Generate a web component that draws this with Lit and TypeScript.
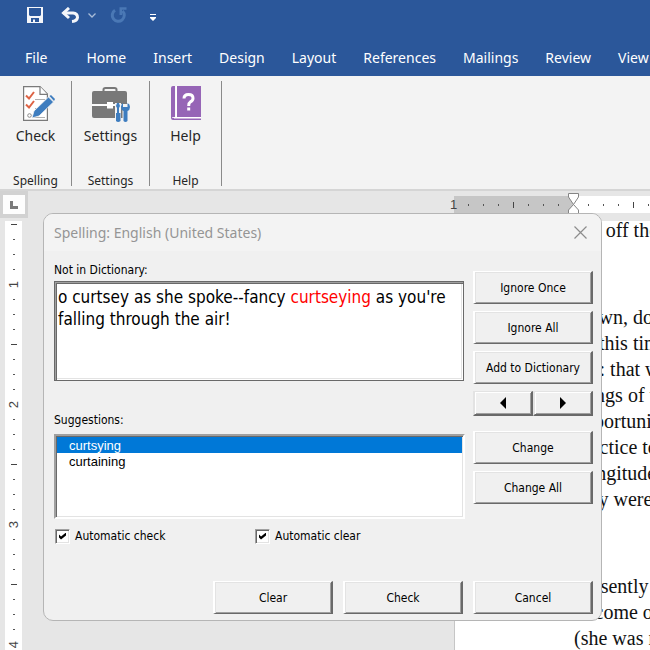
import { LitElement, html, css, svg } from "lit";
import { customElement } from "lit/decorators.js";

const TABS = ["File", "Home", "Insert", "Design", "Layout", "References", "Mailings", "Review", "View"];

const PARAGRAPHS = [
  ["fell off the top"],
  [
    "Down, down, down.",
    "by this time?",
    "see: that would be",
    "things of this sort",
    "opportunity for",
    "practice to say",
    "Longitude I've",
    "they were nice",
  ],
  ["Presently she", "to come out", "(she was rather"],
];

const saveIcon = svg`<svg width="16" height="16" viewBox="0 0 16 16" aria-hidden="true">
  <path fill="#f4f6fa" fill-rule="evenodd" d="M0 0H16V16H0ZM2 1V8L3 9H13L14 8V1ZM4 11V15H6V12.500H8V15H12V11Z"/></svg>`;

const undoIcon = svg`<svg width="19" height="16" viewBox="0 0 19 16" aria-hidden="true" fill="none" stroke="#f4f6fa">
  <path stroke-width="3" d="M2 6H12Q16.500 6.500 16.500 10.500Q16 14 11 14.500"/>
  <path stroke-width="3" d="M8 1L2.500 6L8 11"/></svg>`;

const chevronIcon = svg`<svg width="8" height="5" viewBox="0 0 8 5" aria-hidden="true">
  <path fill="none" stroke="#a9bcd8" stroke-width="1.300" d="M.5 .5L4 4L7.500 .5"/></svg>`;

const redoIcon = svg`<svg width="17" height="17" viewBox="0 0 17 17" aria-hidden="true" fill="none" stroke="#4a78b5">
  <path stroke-width="3" d="M5 3.200A6 6 0 1 0 12.500 4"/>
  <path stroke-width="2.600" d="M16.500 1.500H10.800V8"/></svg>`;

const customizeIcon = svg`<svg width="6" height="7" viewBox="0 0 6 7" aria-hidden="true">
  <path fill="#fff" d="M0 0H6V1H0ZM0 3H6V4L3 7L0 4Z"/></svg>`;

const checkIcon = svg`<svg width="38" height="36" viewBox="-6 0 38 36" aria-hidden="true">
  <path fill="#fff" stroke="#7a7a7a" stroke-width="1.200" d="M.6 .6H17L24.400 8V34.400H.6Z"/>
  <path fill="#fff" stroke="#7a7a7a" stroke-width="1.200" d="M17 .6V8.400H24.400"/>
  <path stroke="#b0b0b0" d="M12 13.500H22M12 22.500H18M9 31.500H22"/>
  <path fill="none" stroke="#dd6345" stroke-width="2" d="M3 9.500L6 12.500L11 6M3 18.500L6 21.500L11 15"/>
  <circle cx="6.500" cy="29.500" r="1.800" fill="none" stroke="#8a8a8a"/>
  <path fill="#3e7dbf" stroke="#f3f3f3" stroke-width=".8" d="M9 32L11 25L25.500 11L30.500 16L16 30Z"/>
  <path fill="#3e7dbf" d="M26.500 10L28 9L32 13L31 15Z"/></svg>`;

const settingsIcon = svg`<svg width="38" height="37" viewBox="0 0 38 37" aria-hidden="true">
  <path fill="none" stroke="#787878" stroke-width="2" d="M11.500 6V3.500Q11.500 2 13.500 2H22.500Q24.500 2 24.500 3.500V6"/>
  <path fill="#787878" d="M2 5H33Q35 5 35 7V18H0V7Q0 5 2 5ZM0 20H35V32H2Q0 32 0 30Z"/>
  <path fill="#fff" d="M0 18.500H35V19.800H0ZM15 16H21V22.500H15Z"/>
  <path stroke="#f3f3f3" stroke-width="6" d="M26 17V36M33.500 18V36"/>
  <path fill="#3e7dbf" d="M25 17H27L28 20L27 22V27H28.500V35Q26 37 24 35V27H25V22L24 20Z"/>
  <path fill="#3e7dbf" d="M31 17V21H35.500V17Q38 18 38 21Q38 24 35.500 25V35Q33.500 37 31.500 35V25Q29 24 29 21Q29 18 31 17Z"/></svg>`;

const helpIcon = svg`<svg width="30" height="34" viewBox="0 0 30 34" aria-hidden="true">
  <path fill="#9665b6" d="M2 0H30V31H5V0H4V31H2Q1 31 1 32H30V34H2Q0 34 0 32V2Q0 0 2 0Z"/>
  <path fill="#fff" d="M4.500 0H6V31H4.500ZM3 31H30V32.500H3Z"/>
  <path fill="none" stroke="#fff" stroke-width="3" d="M13 12.500Q13 8.500 17.500 8.500Q22 8.500 22 12.300Q22 14.500 19.500 15.800Q17.700 17 17.700 20"/>
  <path fill="#fff" d="M16.200 21.500H19.200V24.500H16.200Z"/></svg>`;

const GROUPS = [
  { action: "Check", group: "Spelling", icon: checkIcon },
  { action: "Settings", group: "Settings", icon: settingsIcon },
  { action: "Help", group: "Help", icon: helpIcon },
];

/* One mark per eighth of an inch; a number stands at each full inch. */
const mark = (i: number, inch: number) =>
  i % 8 === 0 ? html`<span class="num">${inch}</span>` : html`<span class=${i % 4 === 0 ? "half" : "dot"}></span>`;

@customElement("word-ribbon")
class WordRibbon extends LitElement {
  static styles = css`
    :host { display: block; font-family: "Noto Sans", "Open Sans", sans-serif; }
    button { border: 0; padding: 0; background: none; font: inherit; color: inherit; display: flex; align-items: center; }
    .head { background: #2b579a; height: 76px; overflow: hidden; }
    .quick { display: flex; align-items: center; height: 30px; padding-left: 27px; }
    .undo { margin-left: 18px; }
    .chev { margin-left: 8px; }
    .redo { margin-left: 14px; }
    .more { margin-left: 23px; padding-top: 4px; }
    .tabs { display: flex; gap: 27px; height: 55px; padding-left: 25px; align-items: center; }
    .tabs a { color: #fff; text-decoration: none; font-size: 14px; line-height: 20px; white-space: nowrap; }
    .tabs a:first-child { margin-right: 12px; }
    .ribbon { background: #f3f3f3; border-bottom: 2px solid #d5d5d5; display: flex; height: 113px; color: #262626; box-sizing: content-box; }
    .group { display: flex; flex-direction: column; align-items: center; min-width: 71px; margin-top: 5px; height: 105px; border-right: 1px solid #8a8a8a; }
    .group:nth-child(2) { min-width: 77px; }
    .act { flex-direction: column; font-size: 14px; line-height: 20px; padding-top: 5px; }
    .pic { height: 40px; display: flex; align-items: flex-start; }
    .name { margin-top: auto; margin-bottom: -3px; font-size: 12px; line-height: 16px; }
  `;
  render() {
    return html`
      <header class="head">
        <div class="quick">
          <button aria-label="Save">${saveIcon}</button>
          <button class="undo" aria-label="Undo">${undoIcon}</button>
          <button class="chev" aria-label="Undo history">${chevronIcon}</button>
          <button class="redo" aria-label="Redo">${redoIcon}</button>
          <button class="more" aria-label="Customize">${customizeIcon}</button>
        </div>
        <nav class="tabs">${TABS.map((t) => html`<a href="#">${t}</a>`)}</nav>
      </header>
      <div class="ribbon">
        ${GROUPS.map(
          (g) => html`<section class="group">
            <button class="act"><span class="pic">${g.icon}</span>${g.action}</button>
            <span class="name">${g.group}</span>
          </section>`
        )}
      </div>`;
  }
}

@customElement("word-document")
class WordDocument extends LitElement {
  static styles = css`
    :host { display: grid; grid-template-columns: 28px 1fr; grid-template-rows: 30px 1fr; background: #e6e6e6; overflow: hidden; font-family: "Liberation Sans", sans-serif; }
    .corner { background: #d2d2d2; padding: 4px 3px; height: 27px; box-sizing: border-box; margin-bottom: 3px; display: flex; }
    .stop { border: 0; padding: 0; background: #fdfdfd; flex: 1; display: flex; align-items: center; justify-content: center; }
    .hruler { margin: 5px 0 8px 418px; display: flex; overflow: hidden; background: linear-gradient(90deg, transparent 8px, #c6c6c6 8px 127px, #fff 127px); }
    .hruler > span, .vruler > span { flex: 0 0 15px; display: flex; align-items: center; justify-content: center; font-size: 13px; line-height: 15px; color: #444; }
    .hruler .dot::after, .vruler .dot::after { content: ""; width: 2px; height: 1px; background: #555; }
    .hruler .dot::after { width: 1px; height: 2px; }
    .hruler .half::after { content: ""; width: 1px; height: 6px; background: #444; }
    .hruler, .vruler { min-width: 0; min-height: 0; }
    .vruler .half::after { content: ""; width: 6px; height: 1px; background: #444; }
    .vruler { margin: 0 6px 0 5px; background: #fff; display: flex; flex-direction: column; overflow: hidden; }
    .vruler > span:first-child { flex-basis: 11px; padding-bottom: 4px; box-sizing: border-box; }
    .vruler .num { transform: rotate(-90deg); }
    .bar { position: relative; display: grid; }
    .indent { position: absolute; left: 540px; top: 2px; }
    .page { margin-left: 426px; border-left: 1px solid #c6c6c6; background: #fff; padding: 0 0 0 119px; overflow: hidden; font: 20px/26px "Liberation Serif", serif; color: #111; white-space: nowrap; }
    .page p { margin: 0 0 61px; }
    .page p:first-child { margin-top: -4px; }
  `;
  render() {
    const across = Math.ceil((window.innerWidth - 446) / 15);
    const down = Math.ceil((window.innerHeight - 217) / 15);
    return html`
      <div class="corner">
        <button class="stop" aria-label="Left tab">
          <svg width="8" height="8" viewBox="0 0 8 8"><path fill="#7a7a7a" d="M0 0H3V5H8V8H0Z" /></svg>
        </button>
      </div>
      <div class="bar">
        <div class="hruler">
          ${Array.from({ length: across }, (_, i) => (i === 8 ? html`<span></span>` : mark(i, Math.abs(i / 8 - 1))))}
        </div>
        <svg class="indent" width="11" height="24" viewBox="0 0 11 24">
          <path fill="#fff" stroke="#858585" d="M.5 .5H10.500V4L5.500 11.500L.5 4ZM5.500 11.500L10.500 17V23.500H.5V17Z" />
        </svg>
      </div>
      <div class="vruler">${Array.from({ length: down }, (_, i) => mark(i + 4, (i + 4) / 8))}</div>
      <article class="page">
        ${PARAGRAPHS.map((p) => html`<p>${p.map((line) => html`${line}<br />`)}</p>`)}
      </article>`;
  }
}

@customElement("spelling-dialog")
class SpellingDialog extends LitElement {
  static styles = css`
    :host { display: block; box-sizing: border-box; background: #f0f0f0; border: 1px solid #b5b5b5; border-radius: 10px; overflow: hidden; color: #000; font: 12px/18px "DejaVu Sans Condensed", "Noto Sans", sans-serif; }
    .title { display: flex; justify-content: space-between; align-items: center; height: 37px; padding: 0 14px 0 10px; background: #f3f3f3; color: #959595; font-family: "Noto Sans", sans-serif; }
    .title h1 { margin: 0; font-size: 14px; font-weight: 400; line-height: 18px; }
    .close { border: 0; padding: 0; background: none; display: flex; }
    .body { display: grid; grid-template-columns: 1fr 120px; column-gap: 10px; padding: 10px 8px 0 10px; }
    .main { display: flex; flex-direction: column; min-width: 0; }
    .text { height: 100px; box-sizing: border-box; margin: 2px -1px 30px 0; border: 1px solid #696969; box-shadow: inset 1px 1px #a0a0a0, inset 2px 2px #696969, inset -1px -1px #fff, inset -2px -2px #e3e3e3; background: #fff; padding: 4px 0 0 3px; font-size: 17px; line-height: 22px; outline: 0; overflow: hidden; }
    .bad { color: #f00; }
    select { appearance: none; height: 85px; box-sizing: border-box; margin: 5px -2px 8px 0; border: 2px solid; border-color: #a0a0a0 #fff #fff #a0a0a0; border-radius: 0; box-shadow: inset 1px 1px #696969, inset -1px -1px #e3e3e3; background: #fff; padding: 1px; font: 13px/16px "Liberation Sans", sans-serif; overflow: hidden; outline: 0; }
    option { box-sizing: border-box; min-height: 16px; height: 16px; padding: 1px 0 0 12px; color: #000; line-height: 16px; border-radius: 0; }
    option:checked { background: linear-gradient(#0078d7, #0078d7); -webkit-text-fill-color: #fff; }
    .checks { display: grid; grid-template-columns: 200px 1fr; }
    .checks label { display: flex; align-items: center; gap: 5px; height: 18px; padding-left: 1px; }
    input { appearance: none; margin: 0; width: 15px; height: 15px; box-sizing: border-box; border: 1px solid; border-color: #a0a0a0 #fff #fff #a0a0a0; box-shadow: inset 1px 1px #696969, inset -1px -1px #e3e3e3; background: #fff; display: grid; place-items: center; }
    input:checked::after { content: ""; width: 7px; height: 7px; background: #000; clip-path: polygon(0 29%, 29% 58%, 100% 0, 100% 43%, 29% 100%, 0 72%); }
    .side { display: flex; flex-direction: column; gap: 7px; padding-top: 10px; }
    .btn { height: 33px; box-sizing: border-box; border: solid; border-width: 1px 2px 1px 2px; border-color: #fff #696969 #696969 #fff; box-shadow: inset 1px 1px #e3e3e3, inset -1px -1px #a0a0a0; background: #f0f0f0; padding: 0; font: inherit; color: #000; border-radius: 0; white-space: nowrap; }
    .nav { display: grid; grid-template-columns: 1fr 1fr; margin-bottom: 8px; }
    .nav .btn { height: 25px; border-color: #e3e3e3 #696969 #696969 #e3e3e3; border-bottom-width: 2px; box-shadow: inset 1px 1px #fff, inset -1px -1px #a0a0a0; display: flex; align-items: center; justify-content: center; }
    .foot { display: grid; grid-template-columns: 120px 120px 120px; gap: 10px; justify-content: end; padding: 36px 8px 6px; }
  `;
  render() {
    return html`
      <div class="title">
        <h1>Spelling: English (United States)</h1>
        <button class="close" aria-label="Close">
          <svg width="13" height="13" viewBox="0 0 13 13"><path stroke="#8c8c8c" stroke-width="1.200" d="M.5 .5L12.500 12.500M12.500 .5L.5 12.500" /></svg>
        </button>
      </div>
      <div class="body">
        <div class="main">
          <span id="word">Not in Dictionary:</span>
          <div class="text" role="textbox" aria-multiline="true" aria-labelledby="word" contenteditable="true" spellcheck="false">o curtsey as she spoke--fancy <span class="bad">curtseying</span> as you're falling through the air!</div>
          <label for="list">Suggestions:</label>
          <select id="list" size="5">
            <option selected>curtsying</option>
            <option>curtaining</option>
          </select>
          <div class="checks">
            <label><input type="checkbox" checked />Automatic check</label>
            <label><input type="checkbox" checked />Automatic clear</label>
          </div>
        </div>
        <div class="side">
          <button class="btn">Ignore Once</button>
          <button class="btn">Ignore All</button>
          <button class="btn">Add to Dictionary</button>
          <div class="nav">
            <button class="btn" aria-label="Previous"><svg width="6" height="12" viewBox="0 0 6 12"><path d="M6 0V12L0 6Z" /></svg></button>
            <button class="btn" aria-label="Next"><svg width="6" height="12" viewBox="0 0 6 12"><path d="M0 0V12L6 6Z" /></svg></button>
          </div>
          <button class="btn">Change</button>
          <button class="btn">Change All</button>
        </div>
      </div>
      <div class="foot">
        <button class="btn">Clear</button>
        <button class="btn">Check</button>
        <button class="btn">Cancel</button>
      </div>`;
  }
}

@customElement("app-root")
class AppRoot extends LitElement {
  static styles = css`
    :host { display: flex; flex-direction: column; height: 100vh; overflow: hidden; }
    .work { position: relative; flex: 1; min-height: 0; display: grid; }
    spelling-dialog { position: absolute; top: 22px; left: 43px; right: 48px; }
  `;
  render() {
    return html`
      <word-ribbon></word-ribbon>
      <div class="work">
        <word-document></word-document>
        <spelling-dialog role="dialog" aria-label="Spelling"></spelling-dialog>
      </div>`;
  }
}
